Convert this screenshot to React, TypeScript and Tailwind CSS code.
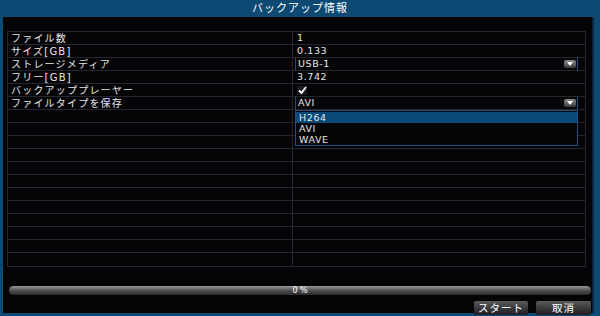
import React from "react";

const FONT = { fontFamily: '"DejaVu Sans", "Noto Sans CJK JP", sans-serif' };

function DropBtn() {
  return (
    <div className="w-[12px] h-[8px] rounded-[2px] bg-gradient-to-b from-[#8a8a8a] to-[#3a3a3a] flex items-center justify-center">
      <svg width="6" height="4" viewBox="0 0 6 4">
        <path d="M0 0 L6 0 L3 4 Z" fill="#ffffff" />
      </svg>
    </div>
  );
}

function Select({ value, children }: { value: string; children?: React.ReactNode }) {
  return (
    <div className="relative flex-1 self-stretch ml-[2px] mr-[7px] flex items-center">
      <div className="flex-1 h-[12px] border-x border-[#1c4f86] flex items-center justify-between pl-[2px] pr-[1px] bg-[#060608]">
        <span>{value}</span>
        <DropBtn />
      </div>
      {children}
    </div>
  );
}

export default function App() {
  const labels = [
    "ファイル数",
    "サイズ[GB]",
    "ストレージメディア",
    "フリー[GB]",
    "バックアッププレーヤー",
    "ファイルタイプを保存",
  ];
  const rows = Array.from({ length: 18 }, (_, i) => i);

  const valueCell = (i: number) => {
    if (i === 0) return <span className="pl-[4px]">1</span>;
    if (i === 1) return <span className="pl-[4px]">0.133</span>;
    if (i === 2) return <Select value="USB-1" />;
    if (i === 3) return <span className="pl-[4px]">3.742</span>;
    if (i === 4)
      return (
        <div className="pl-[4px] flex items-center h-full">
          <div className="w-[10px] h-[9px] bg-[#1a1a22] rounded-[1px] flex items-center justify-center">
            <svg width="9" height="8" viewBox="0 0 9 8">
              <path d="M1 4.5 L3.5 7 L8 1" stroke="#ffffff" strokeWidth="1.8" fill="none" />
            </svg>
          </div>
        </div>
      );
    if (i === 5)
      return (
        <Select value="AVI">
          <div className="absolute left-0 right-0 top-[13px] h-[36px] border border-[#1c4f86] bg-[#040406] z-10 flex flex-col pt-[1px]">
            <div className="h-[11px] bg-[#0b4a78] flex items-center pl-[3px]">H264</div>
            <div className="h-[11px] flex items-center pl-[3px]">AVI</div>
            <div className="h-[11px] flex items-center pl-[3px]">WAVE</div>
          </div>
        </Select>
      );
    return null;
  };

  return (
    <div className="w-[600px] h-[316px] bg-[#0c4a73] flex flex-col text-[#e6e6e6] overflow-hidden leading-none" style={FONT}>
      <div className="h-[17px] flex items-center justify-center text-[11px] tracking-[1px] text-white">
        バックアップ情報
      </div>
      <div className="flex-1 min-h-0 ml-[3px] mr-[6px] mb-[3px] bg-[#040406] flex flex-col border-r-[2px] border-[#0d2436]">
        <div className="mt-[14px] ml-[4px] w-[579px] h-[237px] border border-[#25252e] grid grid-rows-[repeat(18,minmax(0,1fr))] text-[10px] tracking-[1.2px]">
          {rows.map((i) => (
            <div key={i} className={`min-h-0 grid grid-cols-[285px_1fr] ${i < 17 ? "border-b border-[#25252e]" : ""}`}>
              <div className="min-h-0 flex items-center pt-[1px] pl-[3px] border-r border-[#25252e] whitespace-nowrap">{labels[i] ?? ""}</div>
              <div className="min-h-0 flex items-center relative text-[9.5px] tracking-[0.6px]">{valueCell(i)}</div>
            </div>
          ))}
        </div>
        <div className="mt-[19px] ml-[6px] mr-[1px] h-[9px] shrink-0 rounded-full bg-gradient-to-b from-[#9a9a9a] via-[#505050] to-[#2a2a2a] flex items-center justify-center text-[8px] text-white">
          0 %
        </div>
        <div className="mt-[6px] flex justify-end gap-[8px] mr-[1px] text-[10.5px] tracking-[1px]">
          <div className="w-[54px] h-[14px] shrink-0 rounded-t-[2px] bg-gradient-to-b from-[#5a5a5a] to-[#1e1e22] flex items-center justify-center text-white">スタート</div>
          <div className="w-[55px] h-[14px] shrink-0 rounded-t-[2px] bg-gradient-to-b from-[#5a5a5a] to-[#1e1e22] flex items-center justify-center text-white">取消</div>
        </div>
      </div>
    </div>
  );
}
